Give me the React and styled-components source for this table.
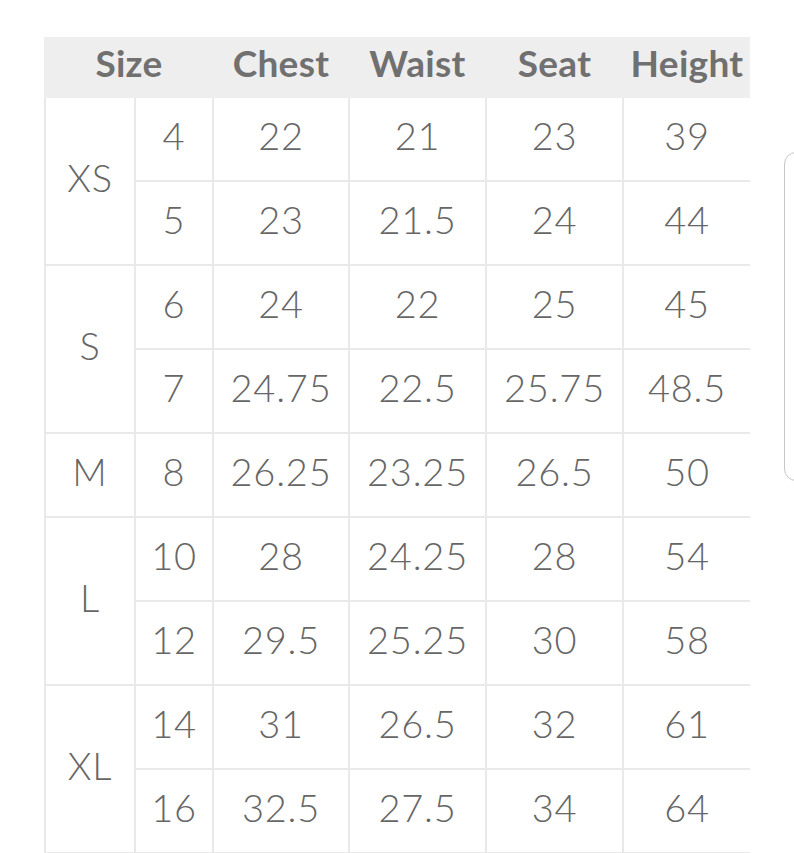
import React from "react";
import styled, { createGlobalStyle } from "styled-components";

const GlobalStyle = createGlobalStyle`
  html, body {
    margin: 0;
    padding: 0;
    background: #ffffff;
    overflow: hidden;
  }
  body {
    font-family: Lato, "Open Sans", "Liberation Sans", sans-serif;
  }
`;

const COLUMNS = "88px 76px 134px 135px 135px 126px";

const Page = styled.div`
  position: relative;
  width: 794px;
  height: 853px;
  padding: 37px 0 0 44px;
  box-sizing: border-box;
`;

const Chart = styled.div`
  width: 706px;
`;

const HeaderRow = styled.div`
  display: grid;
  grid-template-columns: ${COLUMNS};
  column-gap: 2px;
  padding-left: 2px;
  height: 61px;
  background: #eeeeee;
`;

const HeadCell = styled.div`
  grid-column: ${(p) => p.$span || "auto"};
  display: flex;
  align-items: center;
  justify-content: center;
  padding-bottom: 10px;
  font-weight: 700;
  font-size: 37px;
  color: #707070;
  letter-spacing: 0.3px;
`;

const Body = styled.div`
  display: grid;
  grid-template-columns: ${COLUMNS};
  grid-auto-rows: 82px;
  gap: 2px;
  padding: 0 0 2px 2px;
  background: #e9e9e9;
`;

const Cell = styled.div`
  grid-row: ${(p) => (p.$rows ? `span ${p.$rows}` : "auto")};
  display: flex;
  align-items: center;
  justify-content: center;
  padding-bottom: 9px;
  background: #ffffff;
  font-size: 38px;
  font-weight: 300;
  color: #666666;
  letter-spacing: 0.8px;
`;

const ScrollEdge = styled.div`
  position: absolute;
  left: 784px;
  top: 152px;
  width: 24px;
  height: 327px;
  border: 1.5px solid #c6c6c6;
  border-radius: 12px;
  background: #ffffff;
`;

const groups = [
  {
    label: "XS",
    rows: [
      ["4", "22", "21", "23", "39"],
      ["5", "23", "21.5", "24", "44"],
    ],
  },
  {
    label: "S",
    rows: [
      ["6", "24", "22", "25", "45"],
      ["7", "24.75", "22.5", "25.75", "48.5"],
    ],
  },
  { label: "M", rows: [["8", "26.25", "23.25", "26.5", "50"]] },
  {
    label: "L",
    rows: [
      ["10", "28", "24.25", "28", "54"],
      ["12", "29.5", "25.25", "30", "58"],
    ],
  },
  {
    label: "XL",
    rows: [
      ["14", "31", "26.5", "32", "61"],
      ["16", "32.5", "27.5", "34", "64"],
    ],
  },
];

export default function App() {
  return (
    <Page>
      <GlobalStyle />
      <Chart>
        <HeaderRow>
          <HeadCell $span="span 2">Size</HeadCell>
          <HeadCell>Chest</HeadCell>
          <HeadCell>Waist</HeadCell>
          <HeadCell>Seat</HeadCell>
          <HeadCell>Height</HeadCell>
        </HeaderRow>
        <Body>
          {groups.map((g) =>
            g.rows.map((row, i) => (
              <React.Fragment key={g.label + i}>
                {i === 0 && <Cell $rows={g.rows.length}>{g.label}</Cell>}
                {row.map((v, j) => (
                  <Cell key={j}>{v}</Cell>
                ))}
              </React.Fragment>
            ))
          )}
        </Body>
      </Chart>
      <ScrollEdge />
    </Page>
  );
}
